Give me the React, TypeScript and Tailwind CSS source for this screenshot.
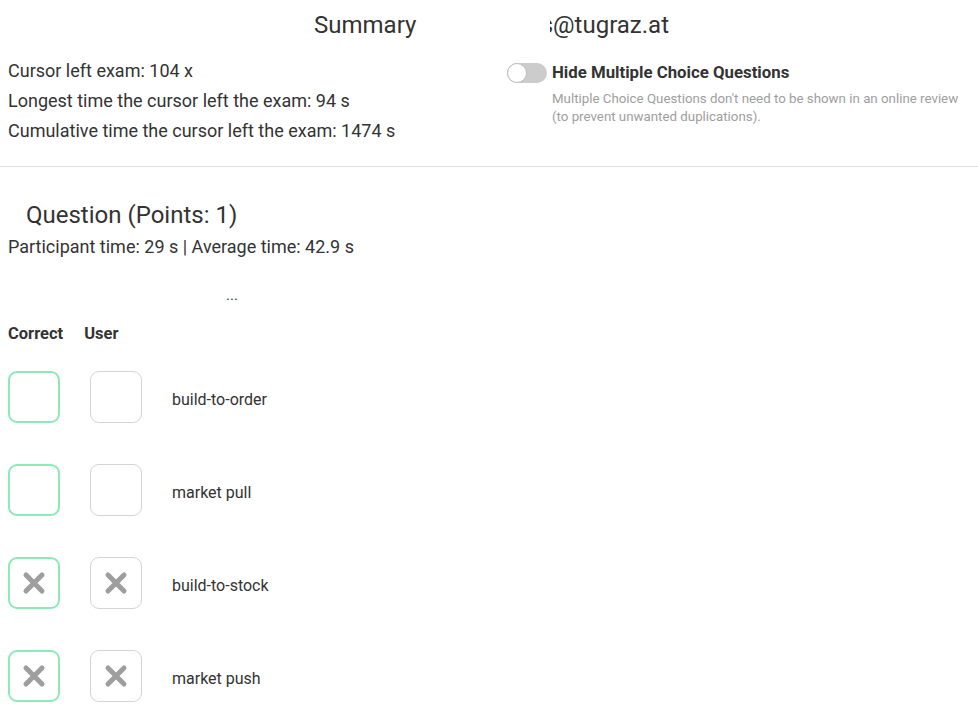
import React from 'react';

const options = [
  { label: 'build-to-order', correct: false, user: false },
  { label: 'market pull', correct: false, user: false },
  { label: 'build-to-stock', correct: true, user: true },
  { label: 'market push', correct: true, user: true },
];

function Cross() {
  return (
    <svg width="26" height="26" viewBox="0 0 26 26">
      <path d="M5 5 L21 21 M21 5 L5 21" stroke="#9e9e9e" strokeWidth="5" strokeLinecap="round" />
    </svg>
  );
}

function Box({ checked, correct }: { checked: boolean; correct?: boolean }) {
  return (
    <div
      className={`w-[52px] h-[52px] rounded-[9px] flex items-center justify-center bg-white ${
        correct ? 'border-2 border-[#8beab8]' : 'border border-[#d4d4d4]'
      }`}
    >
      {checked && <Cross />}
    </div>
  );
}

export default function App() {
  return (
    <div className="w-[978px] h-[714px] bg-white text-[#333] overflow-hidden" style={{ fontFamily: 'Roboto, "Liberation Sans", sans-serif' }}>
      {/* header */}
      <div className="flex items-center h-[50px] text-[24px]">
        <div className="w-[550px] pl-[314px]">Summary</div>
        <div className="w-[119px] overflow-hidden flex justify-end">
          <span className="whitespace-nowrap shrink-0">students@tugraz.at</span>
        </div>
      </div>

      <div className="flex h-[116px]">
        <div className="w-[507px] pl-2 pt-[6px] text-[18px] leading-[30px]">
          <div>Cursor left exam: 104 x</div>
          <div>Longest time the cursor left the exam: 94 s</div>
          <div>Cumulative time the cursor left the exam: 1474 s</div>
        </div>
        <div className="flex flex-col pt-[10px]">
          <div className="flex items-center gap-[5px]">
            <div className="relative w-[40px] h-[20px] rounded-full bg-[#cccccc]">
              <div className="absolute left-0 top-0 w-[20px] h-[20px] rounded-full bg-white border border-[#bdbdbd]" />
            </div>
            <span className="font-bold text-[16.8px]">Hide Multiple Choice Questions</span>
          </div>
          <div className="ml-[45px] mt-[5px] text-[13.3px] leading-[18px] text-[#9e9e9e]">
            Multiple Choice Questions don't need to be shown in an online review
            <br />
            (to prevent unwanted duplications).
          </div>
        </div>
      </div>

      <div className="border-t border-[#e0e0e0]" />

      <div className="pt-[33px] pl-[26px] text-[24px] leading-[30px]">Question (Points: 1)</div>
      <div className="pl-2 pt-[6px] text-[18px] leading-[22px]">Participant time: 29 s | Average time: 42.9 s</div>
      <div className="pl-[226px] pt-[27px] text-[15px] leading-[20px]">...</div>

      <div className="flex gap-[21px] pl-2 pt-[19px] font-bold text-[16.5px] leading-[20px]">
        <span>Correct</span>
        <span>User</span>
      </div>

      <div className="flex flex-col gap-[41px] pl-2 pt-[27px]">
        {options.map((o) => (
          <div key={o.label} className="flex items-center">
            <Box checked={o.correct} correct />
            <div className="ml-[30px]">
              <Box checked={o.user} />
            </div>
            <span className="ml-[30px] mt-[5px] text-[16px]">{o.label}</span>
          </div>
        ))}
      </div>
    </div>
  );
}
